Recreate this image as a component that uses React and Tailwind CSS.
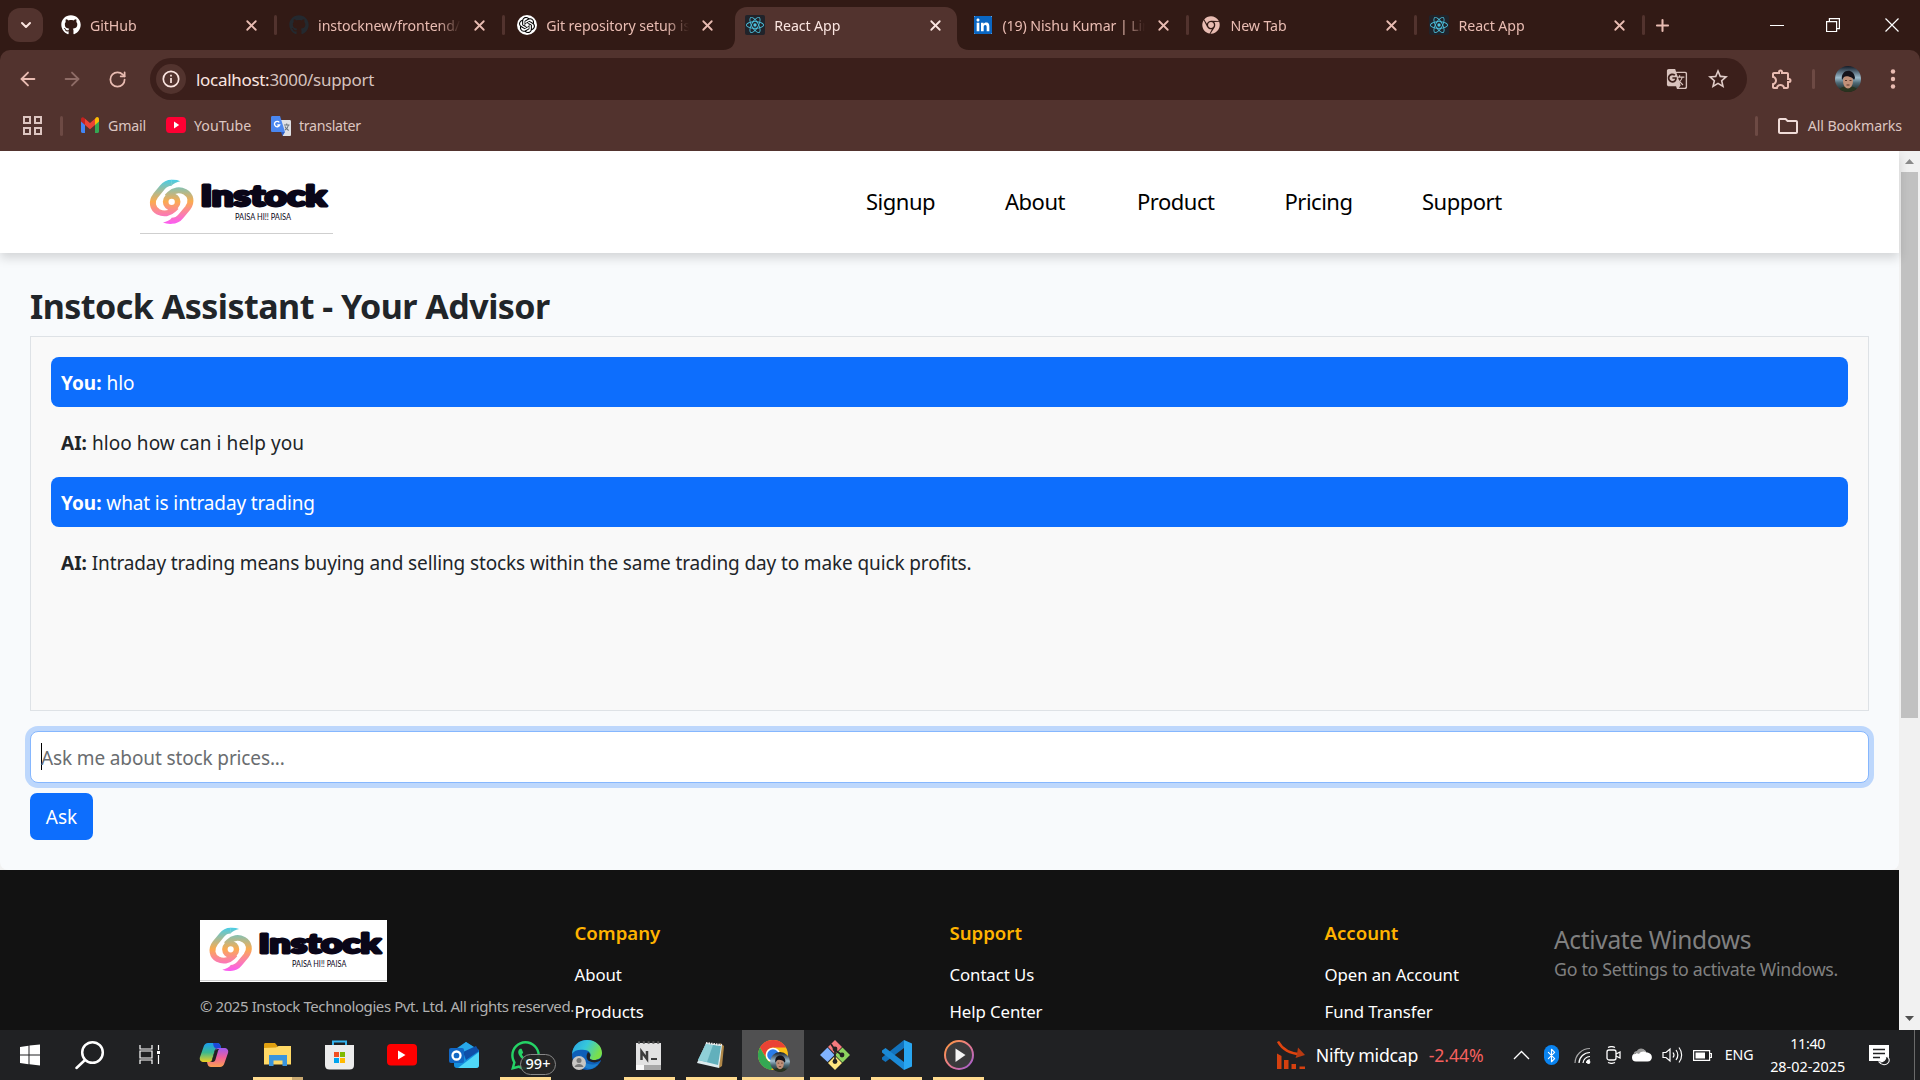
import React from "react";
import { FaGithub, FaChrome, FaWhatsapp } from "react-icons/fa";
import { SiReact, SiOpenai, SiLinkedin } from "react-icons/si";
import { MdGTranslate, MdOutlineExtension, MdStarBorder, MdOutlineFolder } from "react-icons/md";
import { ArrowLeft, ArrowRight, RotateCw, X, Plus, ChevronDown, Bluetooth } from "lucide-react";

const tabs = [
  { title: "GitHub", icon: "github" },
  { title: "instocknew/frontend/s", icon: "githubDark" },
  { title: "Git repository setup issue", icon: "openai" },
  { title: "React App", icon: "react", active: true },
  { title: "(19) Nishu Kumar | LinkedIn", icon: "linkedin" },
  { title: "New Tab", icon: "chrome" },
  { title: "React App", icon: "react" },
];

function Favicon({ name }) {
  if (name === "github") return <FaGithub className="size-5 text-white" />;
  if (name === "githubDark") return <FaGithub className="size-5 text-[#24292f]" />;
  if (name === "openai")
    return (
      <span className="flex size-5 items-center justify-center rounded-full bg-white">
        <SiOpenai className="size-4 text-black" />
      </span>
    );
  if (name === "react")
    return (
      <span className="flex size-5 items-center justify-center rounded-xs bg-[#20232a]">
        <SiReact className="size-[18px] text-[#4cc3e0]" />
      </span>
    );
  if (name === "linkedin")
    return (
      <span className="flex size-5 items-center justify-center">
        <span className="flex size-[18px] items-center justify-center bg-white">
          <SiLinkedin className="size-[18px] shrink-0 text-[#0a66c2]" />
        </span>
      </span>
    );
  return <FaChrome className="size-[18px] text-[#e9bcb2]" />;
}

function Tab({ tab, divider }) {
  return (
    <div className="relative flex h-[50px] w-[228.1px] shrink-0 items-center">
      {tab.active && (
        <svg className="absolute -left-[13px] top-[7px] h-[43px] w-[246px]" viewBox="0 0 246 43">
          <path d="M0 43c8 0 12-5 12-12V12C12 5 17 0 24 0h198c7 0 12 5 12 12v19c0 7 4 12 12 12z" fill="#52332e" />
        </svg>
      )}
      <div className="relative flex w-full items-center pl-[9px]">
        <span className="flex size-5 shrink-0 items-center justify-center"><Favicon name={tab.icon} /></span>
        <span
          className={
            "ml-[9.500px] mt-[2px] w-[142.500px] overflow-hidden whitespace-nowrap text-[14.2px] leading-5 tracking-[-0.1px] [mask-image:linear-gradient(to_right,black_84%,transparent_100%)] " +
            (tab.active ? "text-[#fbe5e0]" : "text-[#e9bcb2]")
          }
        >
          {tab.title}
        </span>
        <X className={"ml-[10px] size-[17px] " + (tab.active ? "text-[#fbe5e0]" : "text-[#e9bcb2]")} strokeWidth={2.5} />
      </div>
      {divider && <span className="absolute right-[3px] h-5 w-[3px] rounded bg-[#52332e]" />}
    </div>
  );
}

function TabStrip() {
  return (
    <div className="flex h-[50px] items-center">
      <button className="ml-2 mr-[8.500px] flex h-[34px] w-[35px] shrink-0 items-center justify-center rounded-xl bg-[#52332e]">
        <ChevronDown className="size-4 text-[#fbe5e0]" strokeWidth={3} />
      </button>
      {tabs.map((t, i) => (
        <Tab key={i} tab={t} divider={i !== 2 && i !== 3} />
      ))}
      <Plus className="ml-[5px] size-[19px] text-[#e9bcb2]" strokeWidth={2.6} />
      <div className="ml-auto mr-[21px] flex items-center text-white">
        <span className="h-px w-[14px] bg-white" />
        <svg className="ml-[42px] size-[14px]" viewBox="0 0 14 14" fill="none" stroke="currentColor" strokeWidth="1.2">
          <path d="M.6 3.6h10v10H.6zM3.4 3.6V.6h10v10h-2.8" />
        </svg>
        <svg className="ml-[45px] size-[14px]" viewBox="0 0 14 14" fill="none" stroke="currentColor" strokeWidth="1.2">
          <path d="M.5.5l13 13M13.5.5l-13 13" />
        </svg>
      </div>
    </div>
  );
}

function Avatar({ className }) {
  return (
    <svg className={className} viewBox="0 0 26 26">
      <defs>
        <clipPath id="avatarClip"><circle cx="13" cy="13" r="13" /></clipPath>
        <linearGradient id="avatarSky" x1="0" y1="0" x2="0" y2="1">
          <stop offset="0" stopColor="#121a26" /><stop offset=".45" stopColor="#9dbccd" /><stop offset=".65" stopColor="#4d6874" /><stop offset="1" stopColor="#151c14" />
        </linearGradient>
      </defs>
      <g clipPath="url(#avatarClip)">
        <path d="M0 0h26v26H0z" fill="url(#avatarSky)" />
        <path d="M3 26c2-8 18-8 21 0z" fill="#29331f" />
        <ellipse cx="13" cy="15" rx="5" ry="7.500" fill="#c09078" />
        <path d="M7 14C5 3 19 1 20 12l-1 2c-1-3-8-5-10-3z" fill="#14131a" />
        <path d="M10 14.500h2M14.500 14.500h2M11.500 19h3" stroke="#5a352a" />
      </g>
    </svg>
  );
}

function Toolbar() {
  return (
    <div className="flex h-[58px] items-center text-[#e9bcb2]">
      <ArrowLeft className="ml-[17px] size-[22px]" strokeWidth={2} />
      <ArrowRight className="ml-[22px] size-[22px] text-[#8e6c66]" strokeWidth={2} />
      <RotateCw className="ml-[25px] size-[19px]" strokeWidth={2.2} />
      <div className="ml-[23px] flex h-[42px] w-[1597px] items-center rounded-full bg-[#3b1f1b]">
        <span className="ml-[6px] flex size-[30px] items-center justify-center rounded-full bg-[#52332e] text-[#fbe5e0]">
          <svg className="size-[18px]" viewBox="0 0 18 18" fill="none" stroke="currentColor" strokeWidth="1.7">
            <circle cx="9" cy="9" r="7.700" />
            <path d="M9 8v5M9 4.700v1.800" />
          </svg>
        </span>
        <span className="ml-[10px] mt-[1px] text-[17px] tracking-[-0.3px] text-[#d5c2be]">
          <span className="text-[#fbe5e0]">localhost:</span>3000/support
        </span>
        <MdGTranslate className="ml-auto size-[22px] text-[#d8c2bd]" />
        <MdStarBorder className="ml-[18px] mr-[17px] size-6 text-[#e0ccc8]" />
      </div>
      <MdOutlineExtension className="ml-[23px] size-6" />
      <span className="ml-[18px] h-5 w-[3px] rounded bg-[#6d4a44]" />
      <Avatar className="ml-[20px] size-[26px]" />
      <svg className="ml-[29px] h-[20px] w-[6px]" viewBox="0 0 6 20" fill="currentColor">
        <circle cx="3" cy="2.500" r="2.200" /><circle cx="3" cy="10" r="2.200" /><circle cx="3" cy="17.500" r="2.200" />
      </svg>
    </div>
  );
}

function TranslateLogo() {
  return (
    <svg className="size-5" viewBox="0 0 20 20">
      <path d="M8 4h10.500c1 0 1.500.5 1.500 1.500v13c0 1-.5 1.500-1.500 1.500H12z" fill="#dfe1e5" />
      <path d="M1.500 0H9l5 16H1.500C.5 16 0 15.500 0 14.500v-13C0 .5.500 0 1.500 0z" fill="#4a87f0" />
      <path d="M10 16h4l-2.500 4z" fill="#2f5fc4" />
      <path d="M8.300 6.400A2.700 2.700 0 1 0 8.700 9H6.300" fill="none" stroke="#fff" strokeWidth="1.300" />
      <path d="M13 9h5.500M15.700 7.600V9M17.500 9c-.5 2.500-2 4-3.500 5M14 10.500c.8 1.800 2 3 3.700 4" fill="none" stroke="#6b7680" strokeWidth="1.100" />
    </svg>
  );
}

function Bookmarks() {
  return (
    <div className="flex h-[43px] items-center pb-[8px] text-[14.2px] tracking-[-0.1px] text-[#ddc6c1]">
      <svg className="ml-[23px] size-[19px]" viewBox="0 0 19 19" fill="none" stroke="currentColor" strokeWidth="2">
        <path d="M1 1h6v6H1zM12 1h6v6h-6zM1 12h6v6H1zM12 12h6v6h-6z" />
      </svg>
      <span className="ml-[18px] h-5 w-[3px] rounded bg-[#6d4a44]" />
      <span className="ml-[18px] flex w-[85px] items-center">
        <svg className="h-[16px] w-[18px]" viewBox="0 0 18 14" preserveAspectRatio="none">
          <path d="M0 3v9.500c0 .8.500 1.500 1.300 1.500H4V6z" fill="#4285f4" />
          <path d="M18 3v9.500c0 .8-.5 1.500-1.300 1.500H14V6z" fill="#34a853" />
          <path d="M14 1.500V7l4-3V2c0-2-2-2.500-3-1.500z" fill="#fbbc04" />
          <path d="M0 2v2l4 3V1.500L3 .700C1.800-.3 0 .3 0 2z" fill="#c5221f" />
          <path d="M4 1.500V7l5 3.800L14 7V1.500L9 5.300z" fill="#ea4335" />
        </svg>
        <span className="ml-[9px] tracking-[-0.2px]">Gmail</span>
      </span>
      <span className="flex w-[105px] items-center">
        <svg className="h-[16px] w-5" viewBox="0 0 20 14" preserveAspectRatio="none"><rect width="20" height="14" rx="3.500" fill="#ff0033" /><path d="M8 4v6l5.200-3z" fill="#fff" /></svg>
        <span className="ml-[8px] tracking-normal">YouTube</span>
      </span>
      <TranslateLogo />
      <span className="ml-[8px] tracking-[-0.3px]">translater</span>
      <span className="ml-auto h-5 w-[3px] rounded bg-[#6d4a44]" />
      <MdOutlineFolder className="ml-[18px] size-6 text-[#f0dcd8]" />
      <span className="ml-[8px] mr-[18px] whitespace-nowrap">All Bookmarks</span>
    </div>
  );
}

function InstockLogo({ className }) {
  return (
    <svg className={className} viewBox="0 0 193 63" preserveAspectRatio="none">
      <defs>
        <linearGradient id="swirl" x1="0" y1="28" x2="0" y2="158" gradientUnits="userSpaceOnUse">
          <stop offset="0" stopColor="#48cde6" />
          <stop offset=".5" stopColor="#fbab4f" />
          <stop offset="1" stopColor="#fb5df0" />
        </linearGradient>
      </defs>
      <rect width="193" height="63" fill="#fff" />
      <g transform="translate(-1 -1.500) scale(.3333)">
        <g fill="none" stroke="url(#swirl)" strokeWidth="18">
          <path d="M98 37C86 37 78 41 70 51L50 75C36 93 40 114 58 124C74 132 92 129 104 117L112 109" />
          <path d="M98 151C110 151 118 147 126 137L146 113C160 95 156 74 138 64C122 56 104 59 92 71L84 79" />
          <circle cx="98" cy="94" r="18" strokeWidth="17" />
        </g>
        <path d="M97 28Q113 27 124 32Q107 35 97 46zM99 160Q83 161 72 156Q89 153 99 142z" fill="url(#swirl)" />
      </g>
      <g fontFamily="Lato, sans-serif" fill="#0a0618">
        <text x="60.500" y="34" textLength="126" lengthAdjust="spacingAndGlyphs" fontWeight="900" fontSize="27.500" stroke="#0a0618" strokeWidth="2.800" strokeLinejoin="round">Instock</text>
        <text x="95" y="48" textLength="56" lengthAdjust="spacingAndGlyphs" fontSize="8.800">PAISA HI!! PAISA</text>
      </g>
      <path d="M0 61.500h193" stroke="#cfcfcf" strokeWidth="1" />
    </svg>
  );
}

const nav = [
  ["Signup", "w-[139px]"],
  ["About", "w-[132px]"],
  ["Product", "w-[147.500px]"],
  ["Pricing", "w-[137.500px]"],
  ["Support", "w-[80px]"],
];

const messages = [
  { who: "You:", text: "hlo", mine: true },
  { who: "AI:", text: "hloo how can i help you", spacing: "tracking-[0.07px]" },
  { who: "You:", text: "what is intraday trading", mine: true, spacing: "tracking-[-0.13px]" },
  { who: "AI:", text: "Intraday trading means buying and selling stocks within the same trading day to make quick profits.", spacing: "tracking-[-0.12px]" },
];

const columns = [
  { title: "Company", links: ["About", "Products"] },
  { title: "Support", links: ["Contact Us", "Help Center"] },
  { title: "Account", links: ["Open an Account", "Fund Transfer"] },
];

function Page() {
  return (
    <div className="relative flex min-w-0 flex-1 flex-col bg-[#f1f1f1]">
      <nav className="relative z-10 flex h-[102px] shrink-0 items-center bg-white shadow-[0_5px_10px_rgba(0,0,0,0.15)]">
        <InstockLogo className="ml-[140px] mt-[3px] h-[63px] w-[193px]" />
        <div className="-mt-px ml-[533px] flex pb-px text-[22px] leading-[33px] tracking-[-0.5px] text-black">
          {nav.map(([label, w]) => (
            <a key={label} className={"shrink-0 whitespace-nowrap " + w}>{label}</a>
          ))}
        </div>
      </nav>
      <main className="flex h-[617px] shrink-0 flex-col rounded-b-lg bg-[#f8fafc] px-[30px] pt-[28px] text-[#212529]">
        <h2 className="h-[55px] whitespace-nowrap text-[34px] font-bold leading-[50px] tracking-[-0.52px]">Instock Assistant - Your Advisor</h2>
        <div className="flex h-[375px] flex-col gap-[10px] border border-[#dee2e6] bg-[#f9f9f9] p-5">
          {messages.map((m, i) => (
            <p key={i} className={"h-[50px] shrink-0 rounded-lg px-[10px] text-[19px] leading-[52px] " + (m.mine ? "bg-[#0d6efd] text-white " : "") + (m.spacing || "")}>
              <strong className="tracking-normal">{m.who}</strong> {m.text}
            </p>
          ))}
        </div>
        <div className="mt-5 flex h-[52px] shrink-0 items-center rounded-lg border border-[#86b7fe] bg-white pl-[10px] text-[19px] tracking-[-0.13px] text-[#6a6d70] shadow-[0_0_0_5px_#bdd7fc]">
          <span className="-mt-[2px] h-[27px] w-px bg-black" />
          <span className="-ml-px mt-[2px]">Ask me about stock prices...</span>
        </div>
        <button className="mt-[10px] h-[47px] w-[63px] rounded-[7px] bg-[#0d6efd] text-[19px] leading-[49px] text-white">Ask</button>
      </main>
      <footer className="flex flex-1 bg-[#121212] pl-[200px] pt-[50px]">
        <div className="w-[374.500px] shrink-0">
          <InstockLogo className="h-[62px] w-[187px]" />
          <p className="mt-[12px] whitespace-nowrap text-[15px] leading-6 tracking-[-0.42px] text-[#b0b0b0]">© 2025 Instock Technologies Pvt. Ltd. All rights reserved.</p>
        </div>
        {columns.map((c) => (
          <div key={c.title} className="w-[375px] shrink-0">
            <h5 className="-mt-px mb-[2px] text-[18.600px] font-semibold leading-[28px] text-[#ffb300]">{c.title}</h5>
            {c.links.map((l) => (
              <a key={l} className="mt-[13px] block text-[16.800px] leading-6 tracking-[-0.08px] text-white first-of-type:mt-[16px]">{l}</a>
            ))}
          </div>
        ))}
      </footer>
      <div className="absolute left-[1554px] top-[772px] whitespace-nowrap text-[#808080]">
        <p className="text-[24.500px] leading-[34px] tracking-[-0.33px]">Activate Windows</p>
        <p className="text-[17.800px] leading-6 tracking-[-0.3px]">Go to Settings to activate Windows.</p>
      </div>
    </div>
  );
}

function Scrollbar() {
  return (
    <div className="flex w-[21px] shrink-0 flex-col items-center bg-[#f1f1f1]">
      <svg className="h-[21px] w-[9px]" viewBox="0 0 9 21"><path d="M0 13l4.500-5L9 13z" fill="#8a8a8a" /></svg>
      <div className="h-[546px] w-[17px] bg-[#c1c1c1]" />
      <svg className="mt-auto h-[21px] w-[9px]" viewBox="0 0 9 21"><path d="M0 7l4.500 5L9 7z" fill="#505050" /></svg>
    </div>
  );
}

const I = "size-[30px]";

const apps = [
  {
    icon: (
      <svg className={I} viewBox="0 0 30 30" fill="#fff"><path d="M5 7l8.500-1.200v8.700H5zM14.500 5.600L25 4.500v10H14.500zM5 15.500h8.500v8.700L5 23zM14.500 15.500H25V25.500l-10.500-1.200z" /></svg>
    ),
  },
  {
    icon: (
      <svg className={I} viewBox="0 0 30 30" fill="none" stroke="#fff" strokeWidth="2.500"><circle cx="17.500" cy="12.500" r="10.300" /><path d="M10 20l-8.500 8" strokeLinecap="round" /></svg>
    ),
  },
  {
    icon: (
      <svg className={I} viewBox="0 0 30 30" fill="none" stroke="#fff" strokeWidth="1.200"><path d="M5 5v4h12V5M5 24v-4h12v4M5 11h12v7H5zM23.500 5v5M23.500 15v9" /><path d="M22 11h3v3h-3z" fill="#fff" stroke="none" /></svg>
    ),
  },
  {
    icon: (
      <svg className={I} viewBox="0 0 30 30">
        <defs>
          <linearGradient id="cpA" x1="0" y1="0" x2="0" y2="1"><stop offset="0" stopColor="#1a9df0" /><stop offset=".5" stopColor="#3bb98f" /><stop offset="1" stopColor="#f0d020" /></linearGradient>
          <linearGradient id="cpB" x1="0" y1="0" x2="0" y2="1"><stop offset="0" stopColor="#a05af0" /><stop offset=".5" stopColor="#f0609a" /><stop offset="1" stopColor="#fba050" /></linearGradient>
        </defs>
        <path d="M9 3h9c2 0 3 1 3.500 3l.5 2h-3c-2 0-3 1-3.500 3l-2.500 9c-.5 1.500-1.500 2-3.500 2H5c-3 0-5-2-4-5L4.500 7C5.200 4.500 7 3 9 3z" fill="url(#cpA)" />
        <path d="M14 3h4c2 0 3 1 3.500 3l.7 2.500H18c-2 0-3-1-3.500-3z" fill="#1d48d8" />
        <path d="M21 27h-9c-2 0-3-1-3.500-3L8 22c3 0 5 0 5.500-2L16 11c.5-2 1.500-3 3.500-3H25c3 0 5 2 4 5l-3.500 10c-.7 2.500-2.500 4-4.500 4z" fill="url(#cpB)" />
        <path d="M15.500 12L13 20.500c-.5 1.500-1 1.500-2 1.500h2.500c2 0 2.500-1 3-2.500L19 11c.4-1.500 1-2 2-2h-2c-2 0-3 1-3.500 3z" fill="#202123" />
      </svg>
    ),
  },
  {
    line: "split",
    icon: (
      <svg className={I} viewBox="0 0 30 30"><path d="M1 4.500C1 3.500 1.500 3 2.500 3H12l2.500 3v4H1z" fill="#e0a010" /><path d="M1 8l12-.5L15.500 6H28v18.500H1z" fill="#ffd966" /><path d="M6 15h18v11h-4.500v-5.500h-9V26H6z" fill="#3a95dd" /></svg>
    ),
  },
  {
    icon: (
      <svg className={I} viewBox="0 0 30 30"><path d="M8 7V1.500h13V7" fill="none" stroke="#35b4f0" strokeWidth="2" /><path d="M0 5h29v20c0 3-1.500 4.500-4.500 4.500h-20C1.500 29.500 0 28 0 25z" fill="#ececec" /><path d="M9 12h5v5H9z" fill="#f25022" /><path d="M15 12h5v5h-5z" fill="#7fba00" /><path d="M9 18h5v5H9z" fill="#00a4ef" /><path d="M15 18h5v5h-5z" fill="#ffb900" /></svg>
    ),
  },
  {
    icon: (
      <svg className={I} viewBox="0 0 30 30"><rect y="4" width="30" height="21.500" rx="4" fill="#f00" /><path d="M11 10.500v9l7.500-4.500z" fill="#fff" /></svg>
    ),
  },
  {
    icon: (
      <svg className={I} viewBox="0 0 30 30"><path d="M5 10L17 2l13 8v15c0 2-1 3-3 3H8c-2 0-3-1-3-3z" fill="#1490df" /><path d="M9 8l8-6 12 8-8 5z" fill="#28a8ea" /><path d="M30 12v13c0 2-1 3-3 3H9z" fill="#4fd8f8" /><path d="M14 12l13-6 3 5-13 9z" fill="#0f4fa8" /><rect y="8" width="15" height="15" rx="2" fill="#1267c4" /><circle cx="7.500" cy="15.500" r="4" fill="none" stroke="#fff" strokeWidth="2.300" /></svg>
    ),
  },
  {
    line: "full",
    icon: (
      <span className="relative flex">
        <FaWhatsapp className="size-[33px] text-[#25d366]" />
        <span className="absolute left-[11px] top-[15px] flex h-[21px] w-[36px] items-center justify-center rounded-full border border-[#888] bg-[#262626]/90 text-[14.500px] font-medium text-white">99+</span>
      </span>
    ),
  },
  {
    icon: (
      <svg className={I} viewBox="0 0 30 30">
        <defs>
          <linearGradient id="edgeTop" x1="0" y1="0" x2="1" y2=".4"><stop offset="0" stopColor="#2a9fe0" /><stop offset=".5" stopColor="#35c8dc" /><stop offset="1" stopColor="#7be048" /></linearGradient>
        </defs>
        <circle cx="15" cy="15" r="15" fill="#0f5fb8" />
        <path d="M0 14C1 5 7 0 15 0c9 0 15 6 15 13 0 5-4 7-8 7-3 0-5-1-4-3 2-3-1-7-5-7C7 9 2 10 0 14z" fill="url(#edgeTop)" />
        <path d="M16 12c-2 3-2 7 1 9 4 2 8 2 12-1l1 2V14c0 5-4 6-8 6-3 0-5-1-4-3 1-2 0-4-2-5z" fill="#202124" />
        <path d="M9 14c-3 8 2 15 10 15 3-1 6-3 8-6-9 4-18 0-18-9z" fill="#1b7fd0" />
        <circle cx="7" cy="23" r="7" fill="#c8c6c4" /><circle cx="7" cy="20.500" r="2.500" fill="#777" /><path d="M2.500 27c1-4 8-4 9 0z" fill="#777" />
      </svg>
    ),
  },
  {
    line: "full",
    icon: (
      <svg className={I} viewBox="0 0 30 30"><path d="M2 3h25v23H2z" fill="#e2e2e2" /><path d="M2 25h25v5H2z" fill="#a8a8a8" /><path d="M2 25h8v5H2z" fill="#f8f8f8" /><path d="M4 2.500h22" stroke="#555" strokeWidth="2.500" strokeDasharray="2 2.800" /><path d="M7.500 20v-8.500L13 19v-8" fill="none" stroke="#3c3c3c" strokeWidth="2.500" /><path d="M17 19h6" stroke="#3c3c3c" strokeWidth="2" /></svg>
    ),
  },
  {
    line: "full",
    icon: (
      <svg className={I} viewBox="0 0 30 30"><path d="M24 3l4 3-2 20-3 2z" fill="#b08848" /><path d="M10 3l16 2-3 23L1 23z" fill="#dcebee" /><path d="M10 4l15 2-3 19L2 20z" fill="#62b0bc" /><path d="M10 4l7 1-6 17-9-2z" fill="#8fd0d8" /><path d="M10 3l16 2" stroke="#eee" strokeWidth="2" strokeDasharray="1.500 1" /></svg>
    ),
  },
  {
    line: "active",
    icon: (
      <span className="relative">
        <svg className={I} viewBox="0 0 30 30"><circle cx="15" cy="15" r="15" fill="#fbc116" /><path d="M2 7.500A15 15 0 0 1 28 7.500H15a7.500 7.500 0 0 0-6.500 11z" fill="#ea4335" /><path d="M2 7.500l6.500 11.300a7.500 7.500 0 0 0 8.500 3.500L13 30A15 15 0 0 1 2 7.500z" fill="#34a853" /><circle cx="15" cy="15" r="7.300" fill="#fff" /><circle cx="15" cy="15" r="5.800" fill="#2b7de9" /></svg>
        <Avatar className="absolute left-[12px] top-[12px] size-[20px]" />
      </span>
    ),
  },
  {
    line: "full",
    icon: (
      <svg className={I} viewBox="0 0 30 30"><path d="M15 0l7 7-7 7-7-7z" fill="#f57a7e" /><path d="M7.500 7.500l7 7.500-7 7L0 15z" fill="#80b3ff" /><path d="M22.500 7.500L30 15l-7.500 7.500L15 15z" fill="#8dd35f" /><path d="M15 16l7 7-7 7-7-7z" fill="#ffe680" /><path d="M11 4l4 6v12M15 10l7 5" fill="none" stroke="#222" strokeWidth="1.700" /><circle cx="15" cy="9" r="2.400" fill="#222" /><circle cx="15" cy="21.500" r="2.400" fill="#222" /><circle cx="22" cy="15" r="2.400" fill="#222" /></svg>
    ),
  },
  {
    line: "full",
    icon: (
      <svg className={I} viewBox="0 0 30 30"><path d="M22 0l8 3.500v23L22 30z" fill="#29a6f0" /><path d="M22 0v8L3.500 22 0 19.500v-2z" fill="#1273bd" /><path d="M22 30v-8L3.500 8 0 10.500v2z" fill="#1b8ad6" /></svg>
    ),
  },
  {
    line: "full",
    icon: (
      <svg className={I} viewBox="0 0 30 30">
        <defs><linearGradient id="mp" x1="0" y1="0" x2="1" y2="1"><stop offset="0" stopColor="#ff9a3c" /><stop offset=".5" stopColor="#e87a8a" /><stop offset="1" stopColor="#9a5ad8" /></linearGradient></defs>
        <circle cx="15" cy="15" r="14" fill="#3a3a3c" stroke="url(#mp)" strokeWidth="2" /><path d="M11.500 8.500v13.500L21.500 15z" fill="#f4f4f4" />
      </svg>
    ),
  },
];

const widths = ["w-[60px]", "w-[60px]", "w-[60px]", "w-[67px]"];

function AppButton({ app, index }) {
  const active = app.line === "active";
  return (
    <div className={"relative flex h-[50px] shrink-0 items-center justify-center " + (index < 4 ? widths[index] : "w-[61.9px]")}>
      {active && <span className="absolute inset-0 bg-[#505051]" />}
      <span className="relative flex">{app.icon}</span>
      {app.line && (
        <span className={"absolute bottom-0 flex h-[3px] bg-[#ffdb8f] " + (active ? "inset-x-0" : "inset-x-[5.500px]")}>
          {app.line === "split" && <span className="ml-auto w-[11px] bg-[#c9a971]" />}
        </span>
      )}
    </div>
  );
}

function Taskbar() {
  return (
    <div className="flex h-[50px] shrink-0 items-center bg-[#202123] text-white">
      {apps.map((a, i) => <AppButton key={i} app={a} index={i} />)}
      <svg className="ml-[287px] h-[28px] w-[28px] shrink-0" viewBox="0 0 28 28">
        <path d="M0 12.500l4.500 2.500v13H0zM7 19h4.500v9H7zM14.500 23H19v5h-4.500zM22.500 25.500H28V28h-5.500z" fill="#d5400f" />
        <path d="M1 .500C5 8 12 12.500 24 13.500" fill="none" stroke="#e0440f" strokeWidth="2.500" />
        <path d="M21 6.500L28 14l-9.500 3 1.500-4z" fill="#b83a12" />
      </svg>
      <span className="ml-[11px] w-[113px] shrink-0 whitespace-nowrap text-[17.700px] tracking-[-0.25px]">Nifty midcap</span>
      <span className="w-[84px] shrink-0 whitespace-nowrap text-[17.700px] tracking-[-0.1px] text-[#f5605e]">-2.44%</span>
      <svg className="h-[10px] w-[17px] shrink-0" viewBox="0 0 17 10" fill="none" stroke="#fff" strokeWidth="1.300"><path d="M1 9l7.500-7.500L16 9" /></svg>
      <span className="ml-[14px] flex h-[20px] w-[15px] shrink-0 items-center justify-center rounded-full bg-[#0a84f0]"><Bluetooth className="size-[15px]" strokeWidth={1.800} /></span>
      <svg className="ml-[15px] size-[17px] shrink-0" viewBox="0 0 17 17" fill="none" stroke="#fff" strokeWidth="1.200">
        <path d="M1 16A15 15 0 0 1 16 1.500" opacity=".6" /><path d="M5 16A11 11 0 0 1 16 5.500M9 16a7 7 0 0 1 7-6.500M12.500 16a3 3 0 0 1 3.500-3" /><circle cx="14.500" cy="15" r="1.300" fill="#fff" />
      </svg>
      <svg className="ml-[15px] h-[18px] w-[15px] shrink-0" viewBox="0 0 15 18" fill="none" stroke="#fff" strokeWidth="1.300"><rect x="1" y="4" width="9" height="10" rx="2" /><path d="M10 8l4-2v6l-4-2M2 1.500c2-1 5-1 7 0M2 16.500c2 1 5 1 7 0" /></svg>
      <svg className="ml-[11px] h-[14px] w-[20px] shrink-0" viewBox="0 0 20 14"><path d="M4 13.500a4 4 0 0 1 0-8C5 1 12-1 14.500 4.500c7 0 7 9 1 9z" fill="#fff" /><path d="M2 6.500c2-1.500 3-1.500 5-.5 2-3 5-3 7.500-1.500C12-1 6 0 5 3 3 3 1 5 2 6.500z" fill="#9a9a9a" /></svg>
      <svg className="ml-[10px] h-[18px] w-[21px] shrink-0" viewBox="0 0 21 18" fill="none" stroke="#fff" strokeWidth="1.200"><path d="M1 6.500h3L8 3v12l-4-3.500H1zM11 6.500c1.200 1.500 1.200 3.500 0 5M14 4c2.200 3 2.200 7 0 10M17 1.500c3.500 4.500 3.500 10.500 0 15" /></svg>
      <svg className="ml-[10px] h-[11px] w-[19px] shrink-0" viewBox="0 0 19 11"><path d="M.6.6h16v9.800h-16zM17 3.500h1.400v4H17" fill="none" stroke="#fff" strokeWidth="1.200" /><path d="M2.500 2.500H12v6H2.500z" fill="#fff" /></svg>
      <span className="ml-[13px] w-[44px] shrink-0 text-[14.200px]">ENG</span>
      <div className="w-[78px] shrink-0 text-center text-[14.400px] leading-[23px]">
        <p className="tracking-[-0.4px]">11:40</p>
        <p className="whitespace-nowrap">28-02-2025</p>
      </div>
      <svg className="ml-[22px] size-[21px] shrink-0" viewBox="0 0 21 21"><path d="M0 0h20v16h-5v3l-3-3H0z" fill="#fff" /><path d="M4 4.500h12M4 8.500h12M4 12.500h7" stroke="#202123" strokeWidth="1.400" /><path d="M10 17c4 0 7-2 7-6 3 1 4 4 2.500 6.500-2 3-7 3-9.500-.5z" fill="#202123" stroke="#fff" strokeWidth="1.100" /></svg>
      <span className="ml-auto mr-[5px] h-[50px] w-px bg-[#6a6a6a]" />
    </div>
  );
}

export default function App() {
  return (
    <div className="flex h-[1080px] w-[1920px] flex-col overflow-hidden bg-[#321a15] font-['Noto_Sans','Open_Sans',sans-serif]">
      <TabStrip />
      <div className="h-[101px] shrink-0 rounded-t-[10px] bg-[#52332e]">
        <Toolbar />
        <Bookmarks />
      </div>
      <div className="flex h-[879px] shrink-0 overflow-hidden">
        <Page />
        <Scrollbar />
      </div>
      <Taskbar />
    </div>
  );
}
